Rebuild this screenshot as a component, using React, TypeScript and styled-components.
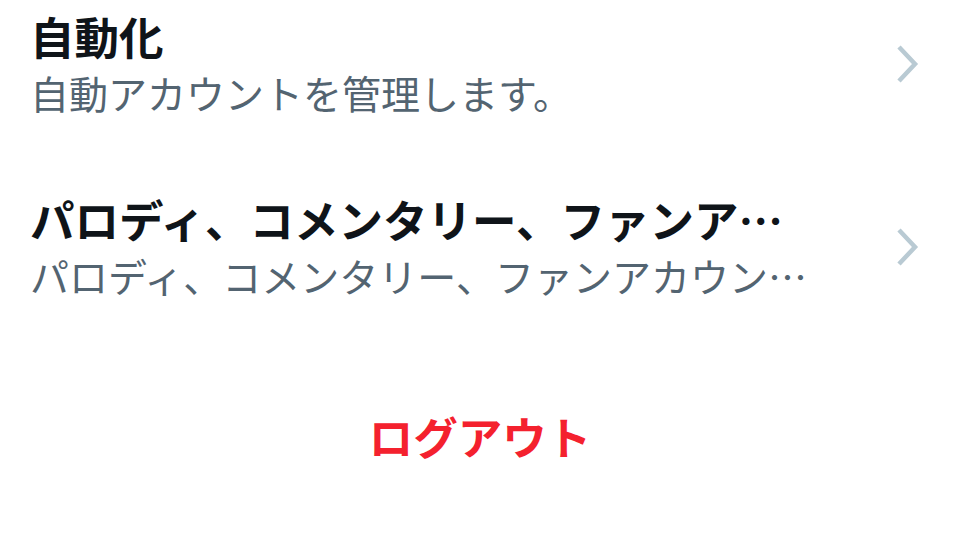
import React, { FC } from "react";
import styled, { createGlobalStyle } from "styled-components";

const GlobalStyle = createGlobalStyle`
  html, body {
    margin: 0;
    padding: 0;
    background: #ffffff;
  }
  body {
    font-family: "Noto Sans CJK JP", "Noto Sans", sans-serif;
    -webkit-font-smoothing: antialiased;
  }
`;

type Item = {
  title: string;
  description: string;
};

const items: Item[] = [
  { title: "自動化", description: "自動アカウントを管理します。" },
  {
    title: "パロディ、コメンタリー、ファンアカウント",
    description: "パロディ、コメンタリー、ファンアカウントとしてのラベルを管理します。",
  },
];

const Chevron: FC = () => (
  <SChevron width="24" height="40" viewBox="0 0 24 40" aria-hidden="true">
    <polyline
      points="4,3 20,20 4,37"
      fill="none"
      stroke="#b9cad3"
      strokeWidth="4.5"
      strokeLinecap="butt"
      strokeLinejoin="miter"
    />
  </SChevron>
);

const SettingRow: FC<Item> = ({ title, description }) => (
  <SRow>
    <STexts>
      <STitle>{title}</STitle>
      <SDesc>{description}</SDesc>
    </STexts>
    <SChevronBox>
      <Chevron />
    </SChevronBox>
  </SRow>
);

const App: FC = () => (
  <>
    <GlobalStyle />
    <SPage>
      <SList>
        {items.map((it) => (
          <SettingRow key={it.title} {...it} />
        ))}
      </SList>
      <SLogout>ログアウト</SLogout>
    </SPage>
  </>
);

const SPage = styled.div`
  width: 960px;
  height: 540px;
  box-sizing: border-box;
  padding: 10px 0 0 30px;
  overflow: hidden;
  display: flex;
  flex-direction: column;
`;

const SList = styled.div`
  display: flex;
  flex-direction: column;
  gap: 76px;
`;

const SRow = styled.div`
  display: flex;
  align-items: center;
  cursor: pointer;
`;

const STexts = styled.div`
  width: 790px;
  min-width: 0;
  display: flex;
  flex-direction: column;
  gap: 5px;
`;

const STitle = styled.div`
  font-size: 44.5px;
  font-weight: 700;
  line-height: 52px;
  color: #0f1419;
  white-space: nowrap;
  overflow: hidden;
  text-overflow: ellipsis;
`;

const SDesc = styled.div`
  font-size: 39px;
  font-weight: 400;
  line-height: 50px;
  color: #536471;
  white-space: nowrap;
  overflow: hidden;
  text-overflow: ellipsis;
`;

const SChevronBox = styled.div`
  flex: 1;
  display: flex;
  justify-content: flex-end;
  padding-right: 41px;
`;

const SChevron = styled.svg`
  display: block;
`;

const SLogout = styled.button`
  margin: 110px 0 0 -30px;
  width: 960px;
  border: none;
  background: transparent;
  padding: 0;
  font-family: inherit;
  font-size: 44.5px;
  font-weight: 700;
  line-height: 52px;
  color: #f4212e;
  text-align: center;
  cursor: pointer;
`;

export default App;
